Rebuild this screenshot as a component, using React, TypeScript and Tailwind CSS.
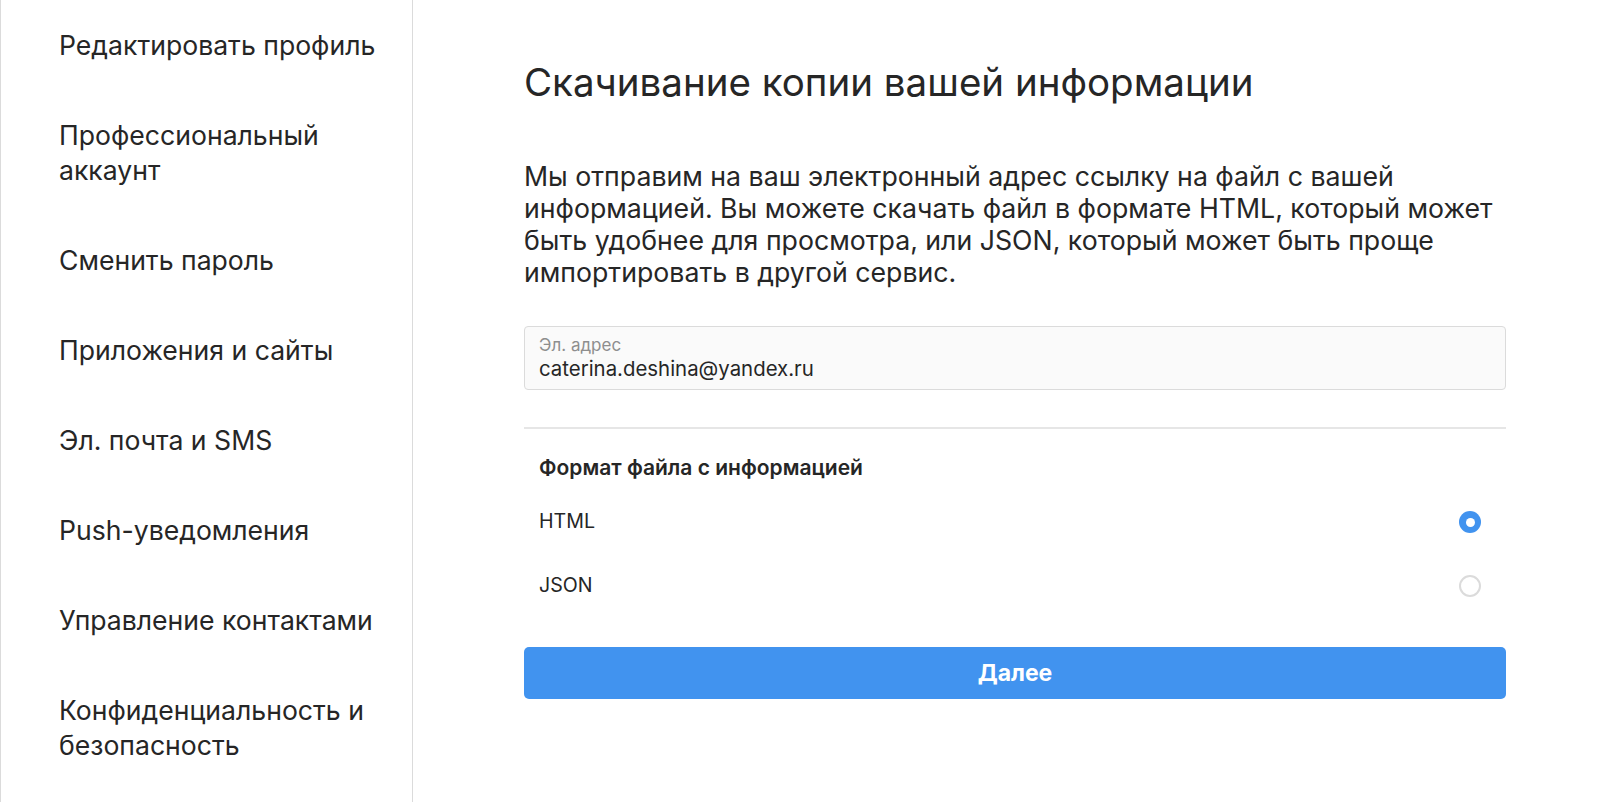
import React from 'react';

const navItems = [
  'Редактировать профиль',
  'Профессиональный аккаунт',
  'Сменить пароль',
  'Приложения и сайты',
  'Эл. почта и SMS',
  'Push-уведомления',
  'Управление контактами',
  'Конфиденциальность и безопасность',
];

function Radio({ checked }: { checked?: boolean }) {
  return checked ? (
    <span className="block w-[22px] h-[22px] rounded-full bg-[#4193ef] flex items-center justify-center">
      <span className="block w-[9px] h-[9px] rounded-full bg-white" />
    </span>
  ) : (
    <span className="block w-[22px] h-[22px] rounded-full border-2 border-[#dbdbdb] bg-white" />
  );
}

export default function App() {
  const [format, setFormat] = React.useState<'html' | 'json'>('html');

  return (
    <div className="flex min-h-screen bg-white text-[#262626] font-['Inter','Liberation_Sans',Arial,sans-serif]">
      <aside className="w-[413px] shrink-0 border-x border-[#dbdbdb]">
        <nav className="flex flex-col">
          {navItems.map((item) => (
            <a
              key={item}
              className="block pl-[58px] pr-[30px] py-[27.5px] text-[26.6px] leading-[35px] text-[#262626]"
            >
              {item}
            </a>
          ))}
        </nav>
      </aside>

      <main className="w-[1094px] pl-[111px] pr-[1px]">
        <h1 className="mt-[62px] text-[38.5px] leading-[40px] font-normal">
          Скачивание копии вашей информации
        </h1>
        <p className="mt-[58px] w-full text-[26.7px] leading-[32px]">
          Мы отправим на ваш электронный адрес ссылку на файл с вашей информацией. Вы можете скачать файл в формате HTML, который может быть удобнее для просмотра, или JSON, который может быть проще импортировать в другой сервис.
        </p>

        <div className="mt-[38px] h-[64px] rounded-[4px] border border-[#dbdbdb] bg-[#fafafa] px-[14px] pt-[9px]">
          <div className="text-[17px] leading-[18px] text-[#8e8e8e]">Эл. адрес</div>
          <div className="text-[20.4px] leading-[30px] text-[#262626]">caterina.deshina@yandex.ru</div>
        </div>

        <div className="mt-[37px] h-[2px] bg-[#e6e6e6]" />

        <div className="mt-[27px] pl-[15px] text-[21px] leading-[24px] font-semibold">
          Формат файла с информацией
        </div>

        <div className="mt-[10px]">
          <label
            className="flex h-[64px] items-center justify-between pl-[15px] pr-[25px] cursor-pointer"
            onClick={() => setFormat('html')}
          >
            <span className="text-[19.6px]">HTML</span>
            <Radio checked={format === 'html'} />
          </label>
          <label
            className="flex h-[64px] items-center justify-between pl-[15px] pr-[25px] cursor-pointer"
            onClick={() => setFormat('json')}
          >
            <span className="text-[19.6px]">JSON</span>
            <Radio checked={format === 'json'} />
          </label>
        </div>

        <button className="mt-[29px] h-[52px] w-full rounded-[5px] bg-[#4193ef] text-[23px] font-bold text-white">
          Далее
        </button>
      </main>
    </div>
  );
}
